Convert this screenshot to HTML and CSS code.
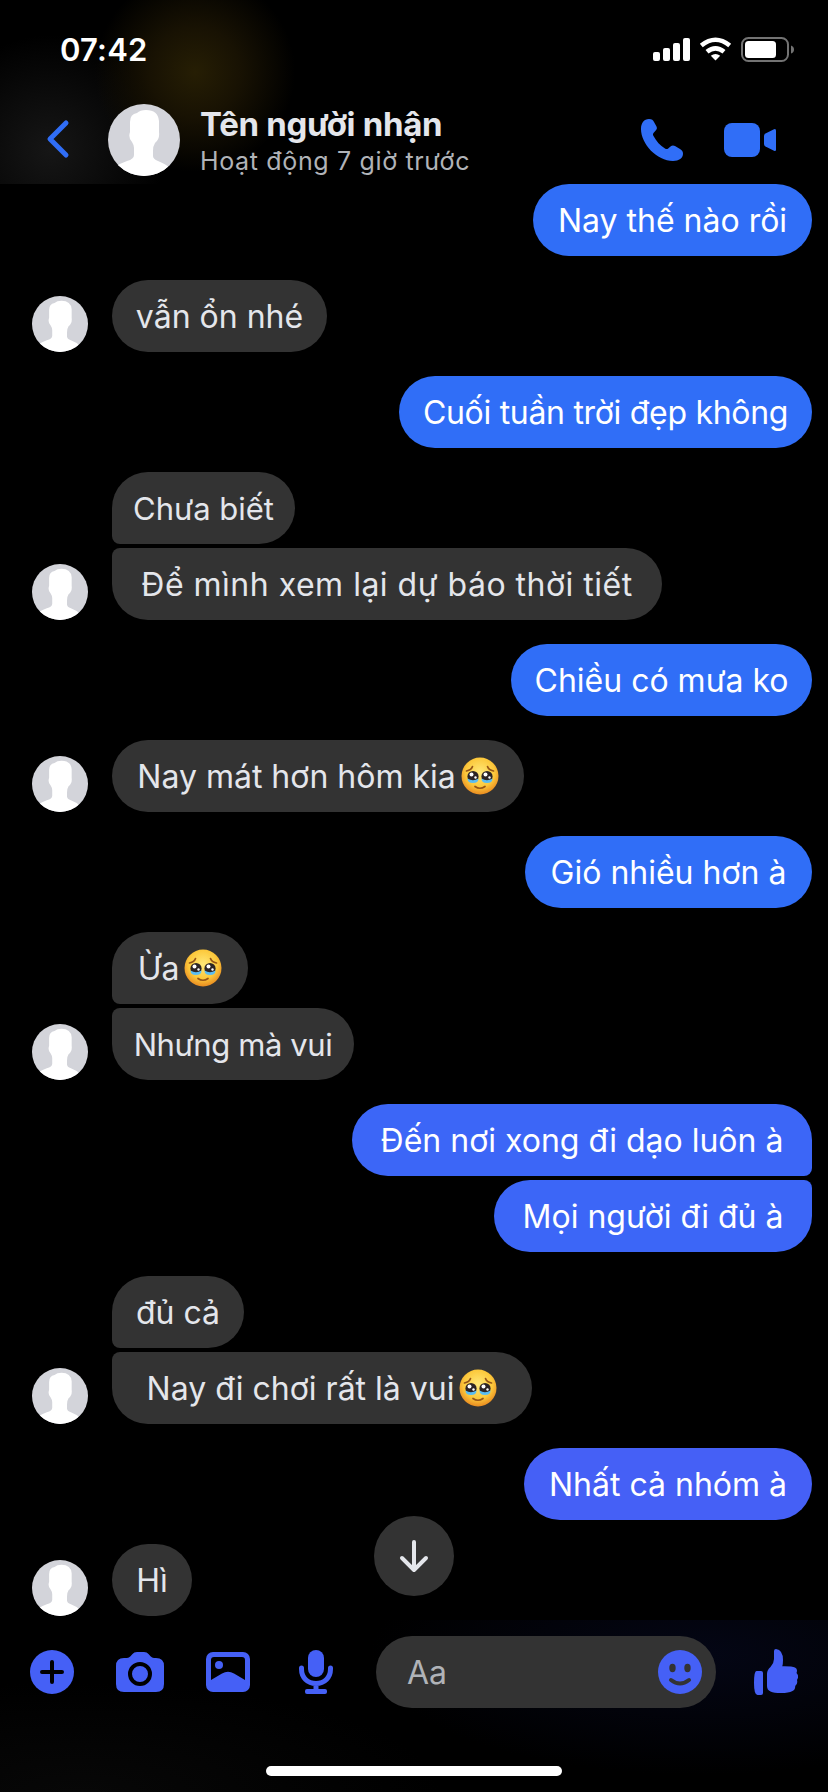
FILE: index.html
```html
<!DOCTYPE html>
<html lang="vi">
<head>
<meta charset="utf-8">
<title>Chat</title>
<link rel="stylesheet" href="styles.css">
</head>
<body>
<svg class="defs" width="0" height="0" aria-hidden="true">
  <defs>
    <clipPath id="round"><circle cx="36" cy="36" r="36"/></clipPath>
    <radialGradient id="face" cx=".5" cy=".4" r=".6"><stop offset="0" stop-color="#ffe878"/><stop offset=".65" stop-color="#fcc83b"/><stop offset="1" stop-color="#e98b20"/></radialGradient>
    <symbol id="person" viewBox="0 0 72 72">
      <g clip-path="url(#round)">
        <rect width="72" height="72" fill="#d3d4da"/>
        <path fill="#fff" d="M22 28V18q0-8 7-9q3-3 9-3q12 0 13 11v11q1 7-4 11q-2 3-2 8v5q0 3 5 5q8 3 13 8v10H7V63q6-4 12-6q7-2 7-6v-7q0-3-2-6q-4-4-2-10z"/>
      </g>
    </symbol>
    <symbol id="tears" viewBox="0 0 38 38">
      <circle cx="19" cy="19" r="18.500" fill="url(#face)"/>
      <path d="M5.500 14q5-1 6-4.500M32.500 14q-5-1-6-4.500" fill="none" stroke="#965516" stroke-width="1.700" stroke-linecap="round"/>
      <circle cx="12" cy="19.500" r="5.600" fill="#2c2425"/><circle cx="26" cy="19.500" r="5.600" fill="#2c2425"/>
      <path d="M6.500 21.500q5.500 3.500 11 0q0 4.500-5.500 4.500t-5.500-4.500zM20.500 21.500q5.500 3.500 11 0q0 4.500-5.500 4.500t-5.500-4.500z" fill="#5bbdf2"/>
      <circle cx="10.500" cy="17.500" r="2" fill="#fff"/><circle cx="24.500" cy="17.500" r="2" fill="#fff"/>
      <circle cx="14.500" cy="20.500" r="1.200" fill="#fff"/><circle cx="28.500" cy="20.500" r="1.200" fill="#fff"/>
      <path d="M14 29.500q5 3.500 10 0" fill="none" stroke="#965516" stroke-width="1.700" stroke-linecap="round"/>
    </symbol>
  </defs>
</svg>
<div class="phone">
  <header class="top">
    <div class="status">
      <span class="clock">07:42</span>
      <svg width="142" height="26" viewBox="0 0 142 26">
        <g fill="#fff">
          <rect x="0" y="15" width="7" height="9" rx="2"/><rect x="10" y="11" width="7" height="13" rx="2"/><rect x="20" y="6" width="7" height="18" rx="2"/><rect x="30" y="1" width="7" height="23" rx="2"/>
          <path d="M62.500 23.500l-4.700-4.700q4.700-3.800 9.400 0z"/>
        </g>
        <g fill="none" stroke="#fff" stroke-width="4.600"><path d="M48.300 8.500q14.200-11.500 28.400 0"/><path d="M54 14.800q8.500-7 17 0"/></g>
        <rect x="89" y="1" width="46" height="23" rx="6.500" fill="none" stroke="#737373" stroke-width="2"/>
        <rect x="92" y="4" width="31" height="17" rx="3.500" fill="#fff"/>
        <path d="M138 8.500q3 1 3 4t-3 4z" fill="#737373"/>
      </svg>
    </div>
    <div class="contact">
      <svg class="back" width="24" height="40" viewBox="0 0 24 40"><path d="M20 4L4 20l16 16" fill="none" stroke="#306ef7" stroke-width="5" stroke-linecap="round" stroke-linejoin="round"/></svg>
      <svg class="portrait" width="72" height="72"><use href="#person"/></svg>
      <div class="who"><div class="name">Tên người nhận</div><div class="seen">Hoạt động 7 giờ trước</div></div>
      <svg class="call" width="42" height="42" viewBox="0 0 42 42"><path fill="#306ef7" d="M0 10C0 4 3 0 8 0c3 0 4 1 5 3l2.500 4.500c.8 1.600.4 2.800-.8 4L12.500 14c-.7.8-.6 1.800 0 3 3 5.500 6.500 9.500 11.500 12.500 1.300.8 2.300.7 3.200-.1l2.300-2c1.500-1.200 3-1.300 4.500-.4l5 3c2 1.200 3 2.700 3 4.800C42 39 38 42 32 42 16 42 0 25 0 10z"/></svg>
      <svg class="video" width="52" height="34" viewBox="0 0 52 34"><rect width="36" height="34" rx="8" fill="#306ef7"/><path fill="#306ef7" d="M40 13q0-1.600 1.500-2.500L50 6.200q2-.8 2 1.300v19q0 2.100-2 1.300l-8.500-4.300Q40 22.600 40 21z"/></svg>
    </div>
  </header>

  <main class="thread">
    <section class="group out"><div class="bubble w279">Nay thế nào rồi</div></section>
    <section class="group in"><svg class="avatar"><use href="#person"/></svg><div class="stack"><div class="bubble w215">vẫn ổn nhé</div></div></section>
    <section class="group out"><div class="bubble w413">Cuối tuần trời đẹp không</div></section>
    <section class="group in"><svg class="avatar"><use href="#person"/></svg><div class="stack"><div class="bubble w183">Chưa biết</div><div class="bubble w550">Để mình xem lại dự báo thời tiết</div></div></section>
    <section class="group out"><div class="bubble w301">Chiều có mưa ko</div></section>
    <section class="group in"><svg class="avatar"><use href="#person"/></svg><div class="stack"><div class="bubble w412">Nay mát hơn hôm kia<svg class="emoji"><use href="#tears"/></svg></div></div></section>
    <section class="group out"><div class="bubble w287">Gió nhiều hơn à</div></section>
    <section class="group in"><svg class="avatar"><use href="#person"/></svg><div class="stack"><div class="bubble w136">Ừa<svg class="emoji"><use href="#tears"/></svg></div><div class="bubble w242">Nhưng mà vui</div></div></section>
    <section class="group out mid"><div class="bubble w460">Đến nơi xong đi dạo luôn à</div><div class="bubble w318">Mọi người đi đủ à</div></section>
    <section class="group in"><svg class="avatar"><use href="#person"/></svg><div class="stack"><div class="bubble w132">đủ cả</div><div class="bubble w420">Nay đi chơi rất là vui<svg class="emoji"><use href="#tears"/></svg></div></div></section>
    <section class="group out low"><div class="bubble w288">Nhất cả nhóm à</div></section>
    <section class="group in"><svg class="avatar"><use href="#person"/></svg><div class="stack"><div class="bubble w80">Hì</div></div></section>
    <button class="jump" aria-label="Xuống cuối"><svg width="30" height="34" viewBox="0 0 30 34"><path d="M15 3v27M3 19l12 12 12-12" fill="none" stroke="#e4e6eb" stroke-width="4" stroke-linecap="round" stroke-linejoin="round"/></svg></button>
  </main>

  <footer class="bottom">
    <div class="composer">
      <svg width="44" height="44" viewBox="0 0 44 44"><circle cx="22" cy="22" r="22" fill="#4560f6"/><path d="M22 12v20M12 22h20" stroke="#000" stroke-width="4" stroke-linecap="round"/></svg>
      <svg class="camera" width="48" height="40" viewBox="0 0 48 40"><path fill="#4560f6" d="M8 6h3q2 0 3.500-1.800l2-2.200Q18 0 21 0h7q3 0 4.500 2l2 2.200Q36 6 38 6h2q8 0 8 8v18q0 8-8 8H8q-8 0-8-8V14q0-8 8-8z"/><circle cx="24" cy="22" r="10" fill="#4560f6" stroke="#000" stroke-width="4"/></svg>
      <svg class="photo" width="44" height="40" viewBox="0 0 44 40"><rect width="44" height="40" rx="7" fill="#4560f6"/><path d="M8 5h28q3 0 3 3v20l-11-6.500q-6-3.500-12 0L5 28V8q0-3 3-3z"/><circle cx="13" cy="13" r="4" fill="#4560f6"/></svg>
      <svg class="mic" width="34" height="44" viewBox="0 0 34 44"><rect x="9" width="16" height="27" rx="8" fill="#4560f6"/><path d="M2.500 18v1c0 8.500 6 14.500 14.500 14.500S31.500 27.500 31.500 19v-1M17 34v7" fill="none" stroke="#4560f6" stroke-width="5" stroke-linecap="round"/><rect x="6" y="39" width="22" height="5" rx="2" fill="#4560f6"/></svg>
      <div class="field"><span>Aa</span><svg width="44" height="44" viewBox="0 0 44 44"><circle cx="22" cy="22" r="22" fill="#4560f6"/><g fill="#333"><ellipse cx="14.500" cy="18" rx="3.200" ry="4.200"/><ellipse cx="29.500" cy="18" rx="3.200" ry="4.200"/></g><path d="M13 30q9 7 18 0" fill="none" stroke="#333" stroke-width="4" stroke-linecap="round"/></svg></div>
      <svg class="like" width="44" height="46" viewBox="0 0 44 46"><g fill="#4560f6"><path d="M2.500 22H7q2 0 2 2v20q0 2-2 2H3.500Q0 46 0 34t2.500-12z"/><path d="M20 2q0-2 2-2 7 1 7 11 0 4-.7 6.200Q38 17 41 18.500q3 1.500 1.500 5.500 3 3 .5 7 1 4-1.800 6 .3 4-3.200 5.200Q35 44 27 44q-7 0-10.500-1.500Q13 41 13 37V25q0-4 3.500-7Q20 14 20 10z"/></g></svg>
    </div>
    <div class="home"></div>
  </footer>
</div>
</body>
</html>
```
FILE: styles.css
```css
* { box-sizing: border-box; }
body { margin: 0; background: #000; font-family: Inter, "Noto Sans", sans-serif; }
svg { display: block; flex: none; }
.defs { position: absolute; }
.phone { width: 828px; height: 1792px; display: flex; flex-direction: column; overflow: hidden; background: #000; }

.top {
  height: 184px;
  flex: none;
  background:
    radial-gradient(circle at 195px 72px, #261e04 0, #181203 45px, transparent 100px),
    radial-gradient(circle at 50px 150px, #161616 0, transparent 115px),
    #000;
}
.status { height: 99px; padding: 0 33px 0 60px; display: flex; align-items: center; justify-content: space-between; }
.clock { color: #fff; font-size: 31px; font-weight: 600; letter-spacing: .2px; }
.contact { height: 85px; padding: 1px 0 0 46px; display: flex; align-items: flex-start; }
.back { margin-top: 19px; }
.portrait { margin: 4px 20px 0 38px; }
.who { width: 441px; padding-top: 4px; }
.name { color: #e4e6eb; font-size: 33px; line-height: 40px; font-weight: 700; letter-spacing: -.3px; }
.seen { color: #b0b3b8; font-size: 25px; line-height: 34px; letter-spacing: .65px; }
.call { margin-top: 19px; }
.video { margin: 23px 0 0 41px; }

.thread { position: relative; height: 1436px; flex: none; padding: 0 16px 4px 32px; display: flex; flex-direction: column; gap: 24px; }
.group { display: flex; }
.out { flex-direction: column; align-items: flex-end; gap: 4px; }
.in { align-items: flex-end; gap: 24px; }
.stack { display: flex; flex-direction: column; align-items: flex-start; gap: 4px; }
.avatar { width: 56px; height: 56px; }
.bubble {
  height: 72px;
  border-radius: 36px;
  display: flex;
  align-items: center;
  justify-content: center;
  color: #fff;
  font-size: 32px;
  white-space: nowrap;
}
.in .bubble { background: #333; color: #e4e6eb; }
.out .bubble { background: #306ef7; }
.mid .bubble { background: #3c66f7; }
.low .bubble { background: #4560f6; }
.in .bubble:not(:last-child) { border-bottom-left-radius: 8px; }
.in .bubble:not(:first-child) { border-top-left-radius: 8px; }
.out .bubble:not(:last-child) { border-bottom-right-radius: 8px; }
.out .bubble:not(:first-child) { border-top-right-radius: 8px; }
.emoji { width: 38px; height: 38px; margin-left: 5px; }

.w80 { width: 80px; }
.w132 { width: 132px; }
.w136 { width: 136px; }
.w183 { width: 183px; font-size: 31px; }
.w215 { width: 215px; }
.w242 { width: 242px; font-size: 31px; letter-spacing: -.4px; }
.w279 { width: 279px; }
.w287 { width: 287px; }
.w288 { width: 288px; }
.w301 { width: 301px; }
.w318 { width: 318px; }
.w412 { width: 412px; }
.w413 { width: 413px; letter-spacing: -.3px; }
.w420 { width: 420px; }
.w460 { width: 460px; }
.w550 { width: 550px; letter-spacing: .5px; }

.jump {
  position: absolute;
  left: 374px;
  bottom: 24px;
  width: 80px;
  height: 80px;
  padding: 0;
  border: 0;
  border-radius: 50%;
  background: #333;
  display: flex;
  align-items: center;
  justify-content: center;
}

.bottom {
  height: 172px;
  flex: none;
  padding-top: 16px;
  background:
    radial-gradient(ellipse 330px 120px at 700px 35px, #040615, transparent),
    radial-gradient(ellipse 360px 110px at 80px 172px, #070707, transparent),
    #000;
}
.composer { height: 72px; padding-left: 30px; display: flex; align-items: center; }
.camera { margin-left: 42px; }
.photo { margin-left: 42px; }
.mic { margin-left: 49px; }
.field {
  width: 340px;
  height: 72px;
  margin-left: 43px;
  padding: 0 14px 0 31px;
  border-radius: 36px;
  background: #333;
  display: flex;
  align-items: center;
  justify-content: space-between;
  color: #b0b3b8;
  font-size: 32px;
}
.like { margin-left: 38px; }
.home { width: 296px; height: 10px; margin: 58px auto 0; border-radius: 5px; background: #fff; }
```
